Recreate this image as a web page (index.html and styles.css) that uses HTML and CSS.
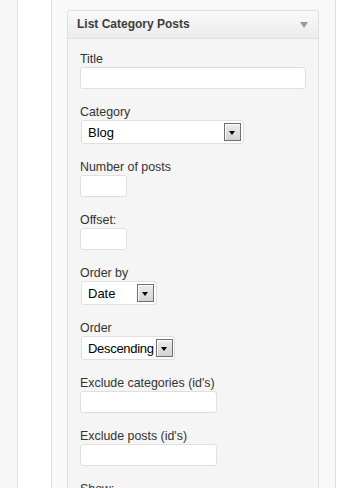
FILE: index.html
```html
<!DOCTYPE html>
<html lang="en">
<head>
  <meta charset="UTF-8" />
  <title>Widgets</title>
  <link rel="stylesheet" href="styles.css">
</head>
<body>
  <div class="rail rail-outer"></div>
  <div class="rail rail-inner"></div>

  <main class="sidebar">
    <div class="widget">
      <div class="widget-top">
        <h3>List Category Posts</h3>
        <span class="toggle"></span>
      </div>

      <div class="widget-inside">
        <div class="field">
          <label>Title</label>
          <input type="text" class="wide">
        </div>

        <div class="field">
          <label>Category</label>
          <div class="select sel-category"><span class="value">Blog</span><span class="drop"></span></div>
        </div>

        <div class="field">
          <label>Number of posts</label>
          <input type="text" class="tiny">
        </div>

        <div class="field">
          <label>Offset:</label>
          <input type="text" class="tiny">
        </div>

        <div class="field">
          <label>Order by</label>
          <div class="select sel-orderby"><span class="value">Date</span><span class="drop"></span></div>
        </div>

        <div class="field">
          <label>Order</label>
          <div class="select sel-order"><span class="value">Descending</span><span class="drop"></span></div>
        </div>

        <div class="field">
          <label>Exclude categories (id's)</label>
          <input type="text" class="mid">
        </div>

        <div class="field">
          <label>Exclude posts (id's)</label>
          <input type="text" class="mid">
        </div>

        <div class="field">
          <label>Show:</label>
        </div>
      </div>
    </div>
  </main>
</body>
</html>
```

FILE: styles.css
```css
html, body {
  height: 100%;
}
body {
  margin: 0;
  display: flex;
  background: #fff;
  font-family: 'Liberation Sans', Arial, sans-serif;
  font-size: 12.4px;
  color: #333;
  overflow: hidden;
}
.rail {
  flex: none;
  border-right: 1px solid #dfdfdf;
}
.rail-outer {
  width: 17px;
  background: #f6f6f6;
}
.rail-inner {
  width: 33px;
  background: #fff;
}
.sidebar {
  flex: none;
  width: 284px;
  padding: 10px 16px 0 15px;
  box-sizing: border-box;
  background: #f9f9f9;
  border-right: 1px solid #dfdfdf;
}
.widget {
  width: 252px;
  box-sizing: border-box;
  border: 1px solid #dfdfdf;
  border-bottom: none;
  border-radius: 3px 3px 0 0;
  background: #f5f5f5;
}
.widget-top {
  display: flex;
  align-items: center;
  justify-content: space-between;
  height: 27px;
  padding: 0 9px;
  background: linear-gradient(to bottom, #f9f9f9, #ececec);
  border-bottom: 1px solid #dfdfdf;
  border-radius: 3px 3px 0 0;
}
.widget-top h3 {
  margin: 0;
  font-size: 12px;
  line-height: 27px;
  color: #3c3c3c;
}
.toggle {
  width: 0;
  height: 0;
  margin-right: 1px;
  border-left: 4px solid transparent;
  border-right: 4px solid transparent;
  border-top: 6px solid #999;
}
.widget-inside {
  padding: 12px 11px 0 12px;
  display: flex;
  flex-direction: column;
  gap: 15px;
}
.field label {
  display: block;
  line-height: 15px;
  padding-top: 1px;
}
.field input {
  display: block;
  box-sizing: border-box;
  height: 22px;
  margin: 0;
  border: 1px solid #dfdfdf;
  border-radius: 3px;
  background: #fff;
}
input.wide { width: 226px; }
input.tiny { width: 47px; }
input.mid { width: 137px; }

.select {
  display: flex;
  align-items: center;
  box-sizing: border-box;
  height: 24px;
  margin-left: 1px;
  padding: 2px 2px 2px 6px;
  border: 1px solid #dfdfdf;
  border-radius: 3px;
  background: #fff;
  color: #000;
  font-size: 13px;
}
.select .value {
  flex: 1;
  white-space: nowrap;
  overflow: hidden;
}
.sel-category { width: 163px; }
.sel-orderby { width: 76px; }
.sel-order { width: 94px; }
.sel-order .value { flex: none; width: 68px; letter-spacing: -0.3px; }

.drop {
  flex: none;
  position: relative;
  box-sizing: border-box;
  width: 17px;
  height: 18px;
  border: 1px solid #6e6e6e;
  box-shadow: inset 1px 1px 0 #fff;
  background: linear-gradient(to bottom, #ececec, #d2d2d2);
}
.drop::after {
  content: "";
  position: absolute;
  left: 4px;
  top: 7px;
  border-left: 3.5px solid transparent;
  border-right: 3.5px solid transparent;
  border-top: 4px solid #000;
}
```
